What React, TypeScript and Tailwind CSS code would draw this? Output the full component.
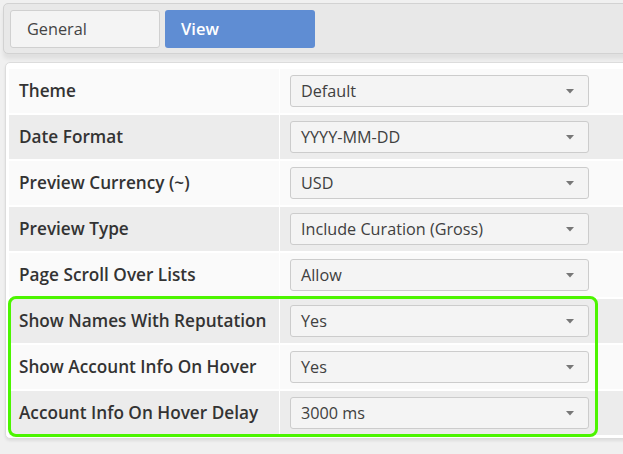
import React from "react";

const rows: { label: string; value: string }[] = [
  { label: "Theme", value: "Default" },
  { label: "Date Format", value: "YYYY-MM-DD" },
  { label: "Preview Currency (~)", value: "USD" },
  { label: "Preview Type", value: "Include Curation (Gross)" },
  { label: "Page Scroll Over Lists", value: "Allow" },
  { label: "Show Names With Reputation", value: "Yes" },
  { label: "Show Account Info On Hover", value: "Yes" },
  { label: "Account Info On Hover Delay", value: "3000 ms" },
];

function Select({ value }: { value: string }) {
  return (
    <div className="w-[299px] h-[32px] bg-[#f4f4f4] border border-[#cccccc] rounded-[3px] flex items-center justify-between pl-[10px] pr-[14px]">
      <span className="text-[16.2px] text-[#404040]">{value}</span>
      <svg width="8" height="5" viewBox="0 0 8 5">
        <path d="M0 0 L8 0 L4 4.5 Z" fill="#777" />
      </svg>
    </div>
  );
}

export default function App() {
  return (
    <div className="relative w-[623px] h-[454px] overflow-hidden bg-[#f0f0f0] font-['Open_Sans',sans-serif]">
      <div className="pl-[3px] pt-[3px]">
        <div className="w-[660px] h-[51px] bg-[#e8e8e8] border border-[#d2d2d2] rounded-[5px] shadow-[0_5px_4px_rgba(0,0,0,0.07)] flex gap-[5px] px-[6px] pt-[6px]">
          <div className="w-[150px] h-[38px] bg-[#f4f4f4] border border-[#d0d0d0] rounded-[3px] flex items-center pl-[16px] text-[16.3px] text-[#444]">
            General
          </div>
          <div className="w-[150px] h-[38px] bg-[#5f8dd3] rounded-[3px] flex items-center pl-[16px] text-[16.5px] font-semibold text-white">
            View
          </div>
        </div>
      </div>
      <div className="ml-[5px] mt-[8px] w-[660px] bg-white border border-[#dcdcdc] rounded-[5px] shadow-[0_2px_3px_rgba(0,0,0,0.08)] pl-[3px] pt-[6px] pb-[3px] flex flex-col gap-[2px]">
        {rows.map((r, i) => {
          const bg = i % 2 === 0 ? "bg-[#fafafa]" : "bg-[#ececec]";
          return (
            <div key={r.label} className="flex h-[44px] gap-[1px]">
              <div className={`w-[270px] ${bg} flex items-center pl-[10px] text-[17.2px] font-semibold text-[#333]`}>
                {r.label}
              </div>
              <div className={`flex-1 ${bg} flex items-center pl-[10px]`}>
                <Select value={r.value} />
              </div>
            </div>
          );
        })}
      </div>
      <div className="absolute left-[8px] top-[296px] w-[590px] h-[141px] border-[3px] border-[#4cf500] rounded-[8px] pointer-events-none" />
    </div>
  );
}
